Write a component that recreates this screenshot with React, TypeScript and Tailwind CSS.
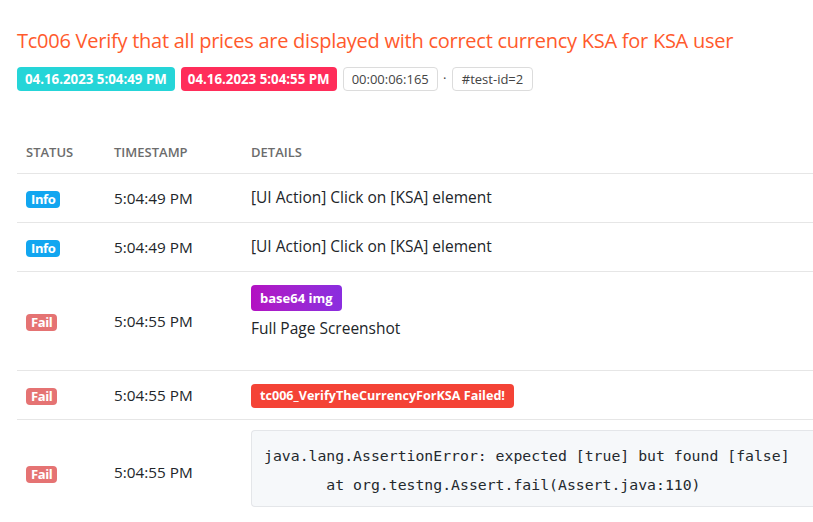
import React from "react";

const sans = { fontFamily: '"Open Sans", "Noto Sans", sans-serif' };

function Row({ status, time, children, h }: { status: "Info" | "Fail"; time: string; children: React.ReactNode; h: string }) {
  return (
    <div className={`flex items-center border-b border-[#e6e6e6] ${h}`}>
      <div className="w-[97px] pl-[9px]">
        {status === "Info" ? (
          <span className="inline-block rounded-[4px] bg-[#12a6f0] px-[5px] text-[13px] font-bold leading-[17px] text-white tracking-[-0.4px]">Info</span>
        ) : (
          <span className="inline-block rounded-[4px] bg-[#e57373] px-[5px] text-[13px] font-bold leading-[17px] text-white tracking-[-0.4px]">Fail</span>
        )}
      </div>
      <div className="w-[137px] text-[15.3px] text-[#212529]">{time}</div>
      <div className="flex-1 text-[15.5px] text-[#212529]">{children}</div>
    </div>
  );
}

export default function App() {
  return (
    <div className="h-[522px] w-[813px] overflow-hidden bg-white" style={sans}>
      <div className="pl-[17px] pt-[27px]">
        <h1 className="text-[20px] leading-[28px] text-[#ff5a2c] tracking-[-0.25px]">
          Tc006 Verify that all prices are displayed with correct currency KSA for KSA user
        </h1>
        <div className="mt-[12px] flex h-[24px] items-center">
          <span className="rounded-[4px] bg-[#25d5d8] px-[8px] text-[13.3px] font-bold leading-[24px] text-white">04.16.2023 5:04:49 PM</span>
          <span className="ml-[6px] rounded-[4px] bg-[#ff2d5a] px-[7px] text-[13.3px] font-bold leading-[24px] text-white">04.16.2023 5:04:55 PM</span>
          <span className="ml-[6px] rounded-[4px] border border-[#dcdcdc] px-[8px] text-[13px] leading-[22px] text-[#444]">00:00:06:165</span>
          <span className="w-[14px] text-center text-[13px] text-[#444]">·</span>
          <span className="rounded-[4px] border border-[#dcdcdc] px-[9px] text-[13px] leading-[22px] text-[#444]">#test-id=2</span>
        </div>
        <div className="mt-[45px]">
          <div className="flex h-[38px] items-center border-b border-[#e6e6e6] pb-[4px] text-[13px] font-semibold uppercase text-[#6c6c6c]">
            <div className="w-[97px] pl-[9px]">Status</div>
            <div className="w-[137px]">Timestamp</div>
            <div className="flex-1">Details</div>
          </div>
          <Row status="Info" time="5:04:49 PM" h="h-[49px]">[UI Action] Click on [KSA] element</Row>
          <Row status="Info" time="5:04:49 PM" h="h-[49px]">[UI Action] Click on [KSA] element</Row>
          <Row status="Fail" time="5:04:55 PM" h="h-[99px]">
            <div className="pb-[19px]">
              <span className="inline-block rounded-[4px] bg-gradient-to-r from-[#b30fc2] to-[#8a2ddf] px-[9px] text-[13px] font-bold leading-[26px] text-white">base64 img</span>
              <div className="mt-[6px] leading-[22px]">Full Page Screenshot</div>
            </div>
          </Row>
          <Row status="Fail" time="5:04:55 PM" h="h-[49px]">
            <span className="inline-block rounded-[4px] bg-[#f44336] px-[9px] text-[12.6px] font-bold leading-[24px] text-white">tc006_VerifyTheCurrencyForKSA Failed!</span>
          </Row>
          <Row status="Fail" time="5:04:55 PM" h="h-[106px]">
            <div className="pb-[9px]">
              <div className="h-[77px] overflow-hidden rounded-l-[4px] border border-r-0 border-[#e4e6e9] bg-[#f6f8fa] pl-[12px] pt-[10px]">
                <pre className="whitespace-pre text-[14.8px] leading-[29px] text-[#24292e]" style={{ fontFamily: '"DejaVu Sans Mono", "Liberation Mono", monospace' }}>
{`java.lang.AssertionError: expected [true] but found [false]
       at org.testng.Assert.fail(Assert.java:110)
       at org.testng.Assert.failNotEquals(Assert.java:1413)`}
                </pre>
              </div>
            </div>
          </Row>
        </div>
      </div>
    </div>
  );
}
